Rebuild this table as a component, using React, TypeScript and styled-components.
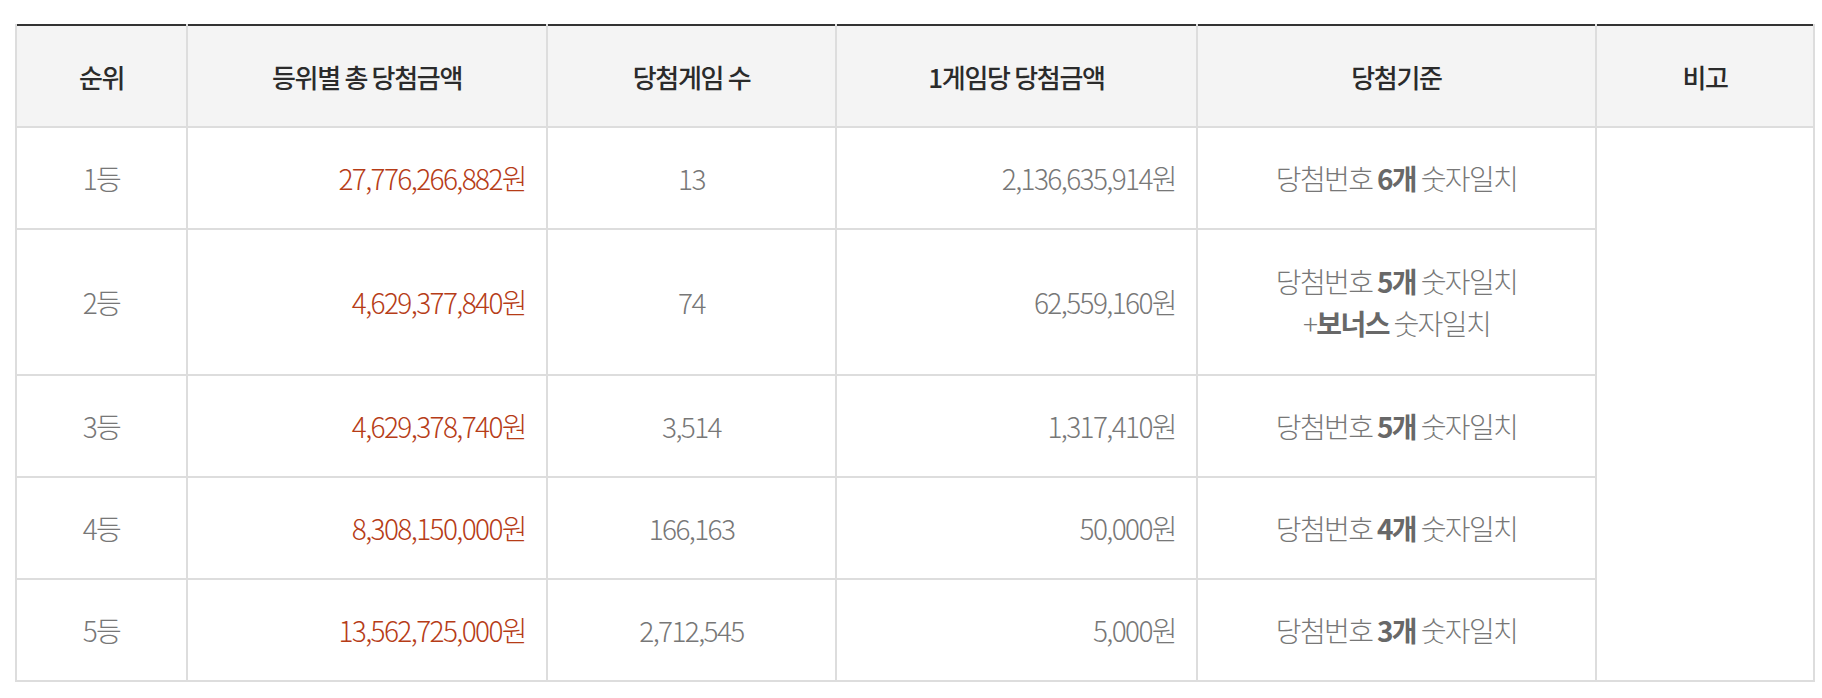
import React, { FC } from "react";
import styled, { createGlobalStyle } from "styled-components";

const GlobalStyle = createGlobalStyle`
    body {
        margin: 0;
        background: #fff;
        font-family: "Noto Sans CJK KR", "Noto Sans", sans-serif;
    }
`;

const Page = styled.div`
    padding: 24px 9px 0 15px;
`;

const Table = styled.table`
    width: 1798px;
    border-collapse: collapse;
    table-layout: fixed;
    border-top: 2px solid #333;
`;

const HeadCell = styled.th`
    height: 98px;
    background: #f4f4f4;
    border: 2px solid #ddd;
    border-top: 0;
    color: #2b2b2b;
    font-size: 26px;
    font-weight: 500;
    letter-spacing: -1.3px;
    text-align: center;
    vertical-align: middle;
`;

const Cell = styled.td<{ $align?: "left" | "center" | "right"; $tone?: "red" }>`
    height: 100px;
    border: 2px solid #ddd;
    padding: 0 ${(p) => (p.$align === "right" ? "20px" : "0")} 0 0;
    color: ${(p) => (p.$tone === "red" ? "#b63c17" : "#777")};
    font-size: 28px;
    font-weight: 300;
    letter-spacing: -1.6px;
    line-height: 42px;
    text-align: ${(p) => p.$align || "center"};
    vertical-align: middle;
`;

const TallCell = styled(Cell)`
    height: 144px;
`;

const Strong = styled.b`
    font-weight: 700;
    color: #686868;
`;

type Row = {
    rank: string;
    total: string;
    games: string;
    each: string;
    count: string;
    bonus?: boolean;
};

const rows: Row[] = [
    { rank: "1등", total: "27,776,266,882원", games: "13", each: "2,136,635,914원", count: "6개" },
    { rank: "2등", total: "4,629,377,840원", games: "74", each: "62,559,160원", count: "5개", bonus: true },
    { rank: "3등", total: "4,629,378,740원", games: "3,514", each: "1,317,410원", count: "5개" },
    { rank: "4등", total: "8,308,150,000원", games: "166,163", each: "50,000원", count: "4개" },
    { rank: "5등", total: "13,562,725,000원", games: "2,712,545", each: "5,000원", count: "3개" },
];

const widths = [171, 360, 289, 361, 399, 218];

const App: FC = () => {
    return (
        <React.Fragment>
            <GlobalStyle />
            <Page>
                <Table>
                    <colgroup>
                        {widths.map((w, i) => (
                            <col key={i} style={{ width: w }} />
                        ))}
                    </colgroup>
                    <thead>
                        <tr>
                            <HeadCell>순위</HeadCell>
                            <HeadCell>등위별 총 당첨금액</HeadCell>
                            <HeadCell>당첨게임 수</HeadCell>
                            <HeadCell>1게임당 당첨금액</HeadCell>
                            <HeadCell>당첨기준</HeadCell>
                            <HeadCell>비고</HeadCell>
                        </tr>
                    </thead>
                    <tbody>
                        {rows.map((r, i) => {
                            const C = r.bonus ? TallCell : Cell;
                            return (
                                <tr key={r.rank}>
                                    <C>{r.rank}</C>
                                    <C $align="right" $tone="red">
                                        {r.total}
                                    </C>
                                    <C>{r.games}</C>
                                    <C $align="right">{r.each}</C>
                                    <C>
                                        당첨번호 <Strong>{r.count}</Strong> 숫자일치
                                        {r.bonus && (
                                            <>
                                                <br />+<Strong>보너스</Strong> 숫자일치
                                            </>
                                        )}
                                    </C>
                                    {i === 0 && <Cell rowSpan={5} />}
                                </tr>
                            );
                        })}
                    </tbody>
                </Table>
            </Page>
        </React.Fragment>
    );
};

export default App;
